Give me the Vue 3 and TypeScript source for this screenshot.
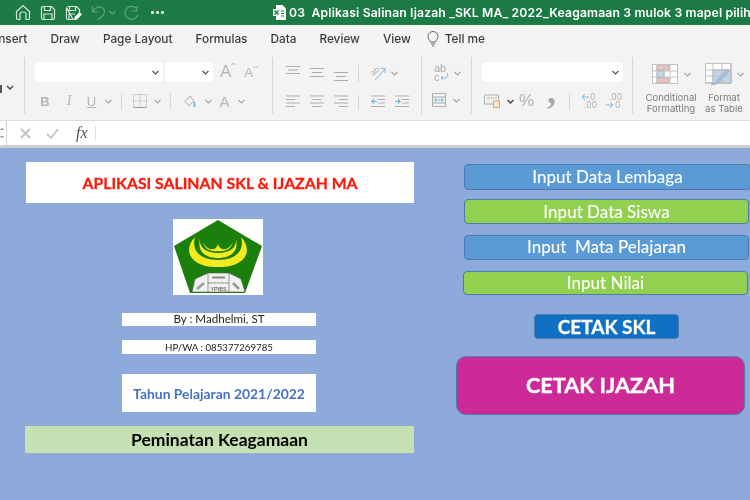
<script setup lang="ts">
const menus = ['Insert', 'Draw', 'Page Layout', 'Formulas', 'Data', 'Review', 'View']
</script>

<template>
  <div class="app">
    <header class="titlebar">
      <div class="quick">
        <svg class="q home" width="16" height="17" viewBox="0 0 16 17"><path d="M1.5 7.5 8 1.5l6.5 6v6.5a1.5 1.5 0 0 1-1.5 1.5h-2V10a2 2 0 0 0-2-2H7a2 2 0 0 0-2 2v5.5H3A1.5 1.5 0 0 1 1.5 14z" /></svg>
        <svg class="q" width="16" height="16" viewBox="0 0 16 16"><path d="M2.5 1.5h9l3 3v8.500a1.500 1.500 0 0 1-1.500 1.500H3A1.500 1.500 0 0 1 1.500 13V2.500zM4.500 1.500v4h6v-4M4 14.500V9h8v5.500" /></svg>
        <svg class="q" width="17" height="16" viewBox="0 0 17 16"><path d="M2.500 1.500h9l3 3v3M8 14.500H3A1.500 1.500 0 0 1 1.500 13V2.500zM4.500 1.500v4h6v-4M4 14.500V9h6" /><path class="pen" d="m9 15 .6-3 5-5 2.400 2.400-5 5z" /></svg>
        <svg class="q dim undo" width="15" height="17" viewBox="0 0 15 17"><path d="M1.500 8V2M1.500 8h6M1.500 8C4 3.500 8 2 11 3.500c3.500 2 3 6.500.5 8.500l-5 4" /></svg>
        <svg class="q dim chev-t" width="7" height="5" viewBox="0 0 7 5"><path d="m.5 1 3 3 3-3" /></svg>
        <svg class="q dim redo" width="16" height="16" viewBox="0 0 16 16"><path d="M13 1v5H8M14 9a6.500 6.500 0 1 1-2-6" /></svg>
        <span class="dots"><i></i><i></i><i></i></span>
      </div>
      <svg class="doc" width="13" height="15" viewBox="0 0 13 15"><path fill="#fff" d="M3 0h6.500L13 3.500V15H3z" /><rect x="0" y="4" width="7" height="7" fill="#e8f2ec" /><path d="m1.500 5.500 4 4m0-4-4 4" stroke="#1c7a45" stroke-width="1.200" /><path d="M8 6h3M8 8.500h3M8 11h3" stroke="#1c7a45" /></svg>
      <span class="filename">03&nbsp; Aplikasi Salinan Ijazah _SKL MA_ 2022_Keagamaan 3 mulok 3 mapel pilihan</span>
    </header>

    <nav class="menubar">
      <span v-for="m in menus" :key="m" class="menu-item">{{ m }}</span>
      <svg class="bulb" width="12" height="16" viewBox="0 0 12 16"><path d="M3.500 11C3 9 1 8 1 5.500a5 5 0 0 1 10 0C11 8 9 9 8.500 11zM4 13h4M5 15h2" /></svg>
      <span class="menu-item tell">Tell me</span>
    </nav>

    <section class="ribbon">
      <div class="group g0">
        <span class="stub"></span>
        <svg class="clipped-chev" width="8" height="5" viewBox="0 0 8 5"><path d="m1 1 3 3 3-3" /></svg>
      </div>

      <div class="group g1">
        <div class="row-top">
          <div class="select font"><svg class="sel-chev" width="7" height="5" viewBox="0 0 7 5"><path d="m.5 1 3 3 3-3" /></svg></div>
          <div class="select size"><svg class="sel-chev" width="7" height="5" viewBox="0 0 7 5"><path d="m.5 1 3 3 3-3" /></svg></div>
          <span class="grow-a big">A<svg width="5" height="4" viewBox="0 0 5 4"><path d="m.5 3 2-2 2 2" /></svg></span>
          <span class="grow-a small">A<svg width="5" height="4" viewBox="0 0 5 4"><path d="m.5 1 2 2 2-2" /></svg></span>
        </div>
        <div class="row-font">
          <b class="tool">B</b>
          <i class="tool serif">I</i>
          <u class="tool">U</u>
          <svg class="chev" width="7" height="5" viewBox="0 0 7 5"><path d="m.5 1 3 3 3-3" /></svg>
          <span class="vsep"></span>
          <svg class="ico" width="14" height="14" viewBox="0 0 14 14"><path stroke-dasharray="1 1" d="M.5.5h13v13H.5zM7 .5v13M.5 7h13" /><path d="M.5 13.500h13" stroke="#999" /></svg>
          <svg class="chev" width="7" height="5" viewBox="0 0 7 5"><path d="m.5 1 3 3 3-3" /></svg>
          <span class="vsep"></span>
          <svg class="ico" width="13" height="13" viewBox="0 0 13 13"><path d="M6 1 1 6.500 5 11l5-5z" /><path d="M10.500 7v5" stroke="#7db8e0" stroke-width="2" /></svg>
          <svg class="chev" width="7" height="5" viewBox="0 0 7 5"><path d="m.5 1 3 3 3-3" /></svg>
          <span class="tool tool-a">A</span>
          <svg class="chev" width="7" height="5" viewBox="0 0 7 5"><path d="m.5 1 3 3 3-3" /></svg>
        </div>
      </div>

      <div class="group g2">
        <div class="row-align">
          <svg class="ico" width="14" height="18" viewBox="0 0 14 18"><path d="M0 1.500h14M2 5h10M0 8.500h14" /></svg>
          <svg class="ico" width="14" height="18" viewBox="0 0 14 18"><path d="M0 3.500h14M2 7.500h10M0 11.500h14" /></svg>
          <svg class="ico" width="14" height="18" viewBox="0 0 14 18"><path d="M0 7.500h14M2 11.500h10M0 15.500h14" /></svg>
          <span class="vsep"></span>
          <svg class="ico" width="16" height="16" viewBox="0 0 16 16"><text class="rot" x="0" y="9" transform="rotate(-40 4 7)">ab</text><path d="m4 15 10-11M9.500 3.500H14V8" stroke="#7db8e0" /></svg>
          <svg class="chev after" width="7" height="5" viewBox="0 0 7 5"><path d="m.5 1 3 3 3-3" /></svg>
        </div>
        <div class="row-align lower">
          <svg class="ico" width="14" height="13" viewBox="0 0 14 13"><path d="M0 1h14M0 4.500h9M0 8h14M0 11.500h9" /></svg>
          <svg class="ico" width="14" height="13" viewBox="0 0 14 13"><path d="M0 1h14M2.500 4.500h9M0 8h14M2.500 11.500h9" /></svg>
          <svg class="ico" width="14" height="13" viewBox="0 0 14 13"><path d="M0 1h14M5 4.500h9M0 8h14M5 11.500h9" /></svg>
          <span class="vsep"></span>
          <svg class="ico" width="14" height="13" viewBox="0 0 14 13"><path d="M0 1h14M7 4.500h7M7 8h7M0 11.500h14" /><path d="M6 6.300H1M3 4 .8 6.300 3 8.600" stroke="#7db8e0" stroke-width="1.300" /></svg>
          <svg class="ico" width="14" height="13" viewBox="0 0 14 13"><path d="M0 1h14M7 4.500h7M7 8h7M0 11.500h14" /><path d="M0 6.300h5M3 4l2.200 2.300L3 8.600" stroke="#7db8e0" stroke-width="1.300" /></svg>
        </div>
      </div>

      <div class="group g3">
        <div class="row-wrap">
          <span class="abc">ab<br />c<svg width="9" height="8" viewBox="0 0 9 8"><path d="M7 0c2 3 0 5-2 5H1M3 3 1 5l2 2" /></svg></span>
          <svg class="chev" width="7" height="5" viewBox="0 0 7 5"><path d="m.5 1 3 3 3-3" /></svg>
        </div>
        <div class="row-wrap lower">
          <svg class="ico" width="14" height="14" viewBox="0 0 14 14"><path d="M.5.5h13v13H.5zM.5 4h13M.5 10h13" /><path d="M2.500 7h9M4.500 5 2.500 7l2 2M9.500 5l2 2-2 2" stroke="#7db8e0" /></svg>
          <svg class="chev" width="7" height="5" viewBox="0 0 7 5"><path d="m.5 1 3 3 3-3" /></svg>
        </div>
      </div>

      <div class="group g4">
        <div class="row-top">
          <div class="select number"><svg class="sel-chev" width="7" height="5" viewBox="0 0 7 5"><path d="m.5 1 3 3 3-3" /></svg></div>
        </div>
        <div class="row-number">
          <svg class="ico" width="16" height="14" viewBox="0 0 16 14"><path d="M.5 1h14v9H.5zM3 4h3M7 4h3M11 4h2" /><rect x="9.500" y="7" width="6" height="6.500" fill="#fbe7d0" stroke="#e8a767" /></svg>
          <svg class="chev dark" width="7" height="5" viewBox="0 0 7 5"><path d="m.5 1 3 3 3-3" /></svg>
          <span class="percent">%</span>
          <span class="comma">,</span>
          <span class="vsep"></span>
          <span class="decimal"><svg width="8" height="8" viewBox="0 0 8 8"><path d="M8 4H1M4 1 1 4l3 3" /></svg><em>0</em><em class="wide">.00</em></span>
          <span class="decimal dec2"><em class="wide">.00</em><svg width="8" height="8" viewBox="0 0 8 8"><path d="M0 4h7M4 1l3 3-3 3" /></svg><em>0</em></span>
        </div>
      </div>

      <div class="group g5">
        <div class="style-btn cond">
          <div class="style-icon">
            <svg width="26" height="20" viewBox="0 0 26 20">
              <path fill="#fff" d="M0 0h26v20H0z" />
              <path fill="#f3c3c6" d="M5 1h12v5H5zM5 14h12v5H5z" />
              <path fill="#bcd6ef" d="M5 7h7v6H5z" />
              <path class="cell" d="M.5.500h25v19H.5zM5 .5v19M12 .5v19M18 .5v19M.5 7h25M.5 13h25" />
            </svg>
            <svg class="chev" width="7" height="5" viewBox="0 0 7 5"><path d="m.5 1 3 3 3-3" /></svg>
          </div>
          <span>Conditional<br />Formatting</span>
        </div>
        <div class="style-btn table">
          <div class="style-icon">
            <svg width="27" height="22" viewBox="0 0 27 22">
              <path fill="#fff" d="M0 0h26v20H0z" />
              <path fill="#bcd6ef" d="M8 7h18v13H8z" />
              <path class="cell" d="M.5.500h25v19H.5zM8 .5v19M17 .5v19M.5 7h25M.5 13h25" />
              <path fill="#9fc3e4" d="M6 21c3 0 6-1 6-4l10-11 2 2-10 11c-2 2-5 3-8 2z" />
            </svg>
            <svg class="chev" width="7" height="5" viewBox="0 0 7 5"><path d="m.5 1 3 3 3-3" /></svg>
          </div>
          <span>Format<br />as Table</span>
        </div>
      </div>
    </section>

    <div class="formula-bar">
      <div class="name-box">
        <svg width="4" height="14" viewBox="0 0 4 14"><path d="M.5 4 2 2.500 3.500 4M.5 10 2 11.500 3.500 10" /></svg>
      </div>
      <div class="formula-input">
        <svg class="fx-btn" width="11" height="11" viewBox="0 0 11 11"><path d="m1 1 9 9m0-9-9 9" /></svg>
        <svg class="fx-btn" width="13" height="11" viewBox="0 0 13 11"><path d="m1 6 4 4 7-9" /></svg>
        <span class="fx">fx</span>
        <span class="fx-sep"></span>
      </div>
    </div>

    <main class="sheet">
      <div class="col-left">
        <div class="title">APLIKASI SALINAN SKL &amp; IJAZAH MA</div>
        <div class="logo">
          <svg width="90" height="76" viewBox="0 0 90 76">
            <path fill="#1b7f0c" d="M45 1 89 27 72 74H17L1 27z" />
            <path fill="#f4ea1e" d="M22 18C8 33 20 49 45 48 70 49 82 33 68 18 72 32 62 41 45 41 28 41 18 32 22 18z" />
            <path fill="#f4ea1e" d="M27 20c-3 12 5 19 18 19s21-7 18-19c1 9-7 14-18 14s-19-5-18-14z" />
            <path fill="#f4ea1e" d="M30 23c3 6 7 8 11 7 2-1 3-2 4-5 1 3 2 4 4 5 4 1 8-1 11-7-2 8-9 10-15 9-6 1-13-1-15-9z" />
            <path fill="#f2f2f0" stroke="#555" stroke-width=".6" d="M22 60 35 54H56L68 60 72 73H19z" />
            <path stroke="#555" stroke-width=".6" d="M35 54V73M56 54V73M35 64H56" />
            <path stroke="#8a8a8a" stroke-width="2" d="M39 58.500H52" />
            <path stroke="#9a9a9a" stroke-width="2.500" d="m24 70 7-6M60 64l6 6" />
            <text x="45.500" y="71.500" text-anchor="middle" class="ypibs">YPIBS</text>
          </svg>
        </div>
        <div class="credit by">By : Madhelmi, ST</div>
        <div class="credit hp">HP/WA : 085377269785</div>
        <div class="year">Tahun Pelajaran 2021/2022</div>
        <div class="track">Peminatan Keagamaan</div>
      </div>

      <div class="col-right">
        <button class="btn blue lembaga">Input Data Lembaga</button>
        <button class="btn green siswa">Input Data Siswa</button>
        <button class="btn blue mapel">Input&nbsp; Mata Pelajaran</button>
        <button class="btn green nilai">Input Nilai</button>
        <button class="btn skl">CETAK SKL</button>
        <button class="btn ijazah">CETAK IJAZAH</button>
      </div>
    </main>
  </div>
</template>

<style scoped>
.app {
  width: 750px;
  height: 500px;
  overflow: hidden;
  display: flex;
  flex-direction: column;
  font-family: Inter, "Liberation Sans", sans-serif;
  background: #8eaadb;
  filter: blur(0.35px);
}

svg {
  flex: none;
  display: block;
  fill: none;
  stroke: #adadad;
}

/* title bar */
.titlebar {
  height: 25px;
  flex: none;
  display: flex;
  align-items: center;
  background: #1c7a45;
  color: #fff;
  white-space: nowrap;
  overflow: hidden;
}
.quick {
  width: 273px;
  flex: none;
  display: flex;
  align-items: center;
  padding-left: 15px;
  box-sizing: border-box;
}
.quick svg {
  stroke: #d6e8dc;
  stroke-width: 1.2;
  margin-right: 9px;
}
.quick .dim {
  stroke: #5fa37c;
}
.quick .pen {
  fill: #fff;
  stroke: none;
}
.quick .undo {
  margin-right: 3px;
}
.quick .chev-t {
  margin-right: 8px;
}
.dots {
  display: flex;
  gap: 2.500px;
  margin-left: 2px;
}
.dots i {
  width: 2.500px;
  height: 2.500px;
  border-radius: 50%;
  background: #e4f0e8;
}
.doc {
  margin-right: 3px;
  stroke: none;
}
.filename {
  font-size: 12.2px;
  font-weight: 600;
  letter-spacing: 0.15px;
}

/* menu */
.menubar {
  height: 27px;
  flex: none;
  display: flex;
  align-items: center;
  gap: 23px;
  margin-left: -5px;
  background: #f4f4f4;
  font-size: 11.800px;
  font-weight: 500;
  color: #3c3c3c;
  white-space: nowrap;
}
.bulb {
  stroke: #666;
  margin-left: -7px;
}
.tell {
  margin-left: -17px;
}

/* ribbon */
.ribbon {
  height: 69px;
  flex: none;
  display: flex;
  padding-top: 5px;
  box-sizing: border-box;
  background: #f3f3f3;
  border-bottom: 1px solid #dcdcdc;
}
.group {
  height: 57px;
  box-sizing: border-box;
  border-left: 1px solid #d6d6d6;
  display: flex;
  flex-direction: column;
}
.g0 {
  width: 24px;
  border-left: 0;
  flex-direction: row;
  align-items: flex-start;
  gap: 4px;
  padding-top: 28px;
}
.stub {
  width: 2px;
  height: 8px;
  background: #555;
}
.clipped-chev {
  stroke: #444;
  stroke-width: 1.4;
}
.g1 {
  width: 248px;
}
.g2 {
  width: 149px;
}
.g3 {
  width: 50px;
}
.g4 {
  width: 161px;
}
.g5 {
  flex: 1;
  flex-direction: row;
}
.row-top {
  display: flex;
  align-items: center;
  height: 20px;
  padding: 5px 0 0 10px;
  box-sizing: content-box;
}
.select {
  height: 20px;
  box-sizing: border-box;
  background: #fff;
  border-radius: 3px;
  display: flex;
  align-items: center;
  justify-content: flex-end;
  padding-right: 4px;
}
.font {
  width: 128px;
}
.size {
  width: 48px;
  margin-left: 2px;
}
.number {
  width: 141px;
}
.sel-chev {
  stroke: #555;
  stroke-width: 1.2;
}
.grow-a {
  display: flex;
  align-items: flex-start;
  color: #b5b5b5;
  font-family: "Liberation Sans", sans-serif;
}
.grow-a svg {
  stroke: #8fc1e3;
}
.big {
  font-size: 17px;
  margin-left: 7px;
}
.small {
  font-size: 13px;
  margin-left: 8px;
}
.row-font {
  display: grid;
  grid-template-columns: 24px 24px 21px 12px 14px 24px 10px 16px 24px 12px 21px 12px;
  align-items: center;
  justify-items: center;
  height: 22px;
  margin-top: 8px;
  padding-left: 8px;
  font-size: 14px;
  color: #b5b5b5;
}
.tool {
  font-family: "Liberation Sans", sans-serif;
  font-size: 13px;
}
.serif {
  font-family: "Liberation Serif", serif;
  font-size: 14px;
}
.tool-a {
  font-size: 15px;
}
.chev {
  stroke: #a6a6a6;
  stroke-width: 1.2;
}
.chev.dark {
  stroke: #444;
  stroke-width: 1.4;
}
.vsep {
  display: block;
  width: 1px;
  height: 17px;
  background: #d6d6d6;
}
.row-align {
  display: flex;
  align-items: flex-start;
  gap: 10px;
  padding: 8px 0 0 13px;
  height: 18px;
}
.row-align .vsep + svg {
  margin-left: 2px;
}
.row-align .chev {
  margin-top: 6px;
  margin-left: -6px;
}
.rot {
  font-family: "Liberation Sans", sans-serif;
  font-size: 8px;
  fill: #b0b0b0;
  stroke: none;
}
.row-align.lower {
  margin-top: 12px;
  padding-top: 0;
  height: 13px;
}
.row-align.lower .vsep {
  height: 15px;
}
.row-wrap {
  display: flex;
  align-items: center;
  gap: 3px;
  height: 18px;
  padding: 7px 0 0 12px;
}
.row-wrap.lower {
  margin-top: 9px;
  padding-top: 0;
  padding-left: 10px;
  gap: 7px;
}
.abc {
  display: block;
  width: 17px;
  font-family: "Liberation Sans", sans-serif;
  font-size: 11px;
  line-height: 9px;
  color: #aaa;
}
.abc svg {
  display: inline-block;
  stroke: #7db8e0;
}
.row-number {
  display: flex;
  align-items: center;
  height: 22px;
  margin-top: 8px;
  padding-left: 12px;
}
.row-number .chev.dark {
  margin-left: 7px;
}
.percent {
  margin-left: 5px;
  width: 16px;
  font-family: "Liberation Sans", sans-serif;
  font-size: 17px;
  font-weight: 300;
  color: #b0b0b0;
}
.comma {
  margin-left: 12px;
  width: 9px;
  height: 22px;
  line-height: 2px;
  font-family: "Liberation Serif", serif;
  font-size: 36px;
  font-weight: 700;
  color: #a8a8a8;
}
.row-number .vsep {
  margin-left: 13px;
}
.decimal {
  width: 16px;
  margin-left: 11px;
  display: grid;
  grid-template-columns: 9px 7px;
  font-size: 8.500px;
  line-height: 8px;
  color: #b0b0b0;
  align-items: center;
}
.decimal em {
  font-style: normal;
}
.decimal .wide {
  grid-column: 1 / 3;
  text-align: right;
}
.decimal svg {
  stroke: #7db8e0;
}
.dec2 {
  margin-left: 9px;
}

.style-btn {
  display: flex;
  flex-direction: column;
  align-items: center;
  font-size: 9.600px;
  line-height: 11px;
  color: #7c7c7c;
  text-align: center;
}
.style-icon {
  flex: none;
  display: flex;
  align-items: center;
  gap: 6px;
  height: 22px;
  margin-top: 6px;
  margin-bottom: 7px;
}
.cond {
  width: 74px;
  padding-left: 1px;
}
.table {
  width: 42px;
  margin-left: -5px;
}
.table .style-icon {
  gap: 5px;
}
.cell {
  stroke: #c2c2c2;
}

/* formula bar */
.formula-bar {
  height: 27px;
  flex: none;
  box-sizing: border-box;
  display: flex;
  gap: 1px;
  background: #cfcfcf;
  padding-bottom: 3px;
}
.name-box {
  width: 6px;
  background: #fff;
  display: flex;
  align-items: center;
}
.name-box svg {
  stroke: #555;
}
.formula-input {
  flex: 1;
  background: #fff;
  display: flex;
  align-items: center;
  padding-left: 13px;
  gap: 15px;
}
.fx-btn {
  stroke: #c4c4c4;
  stroke-width: 1.8;
}
.fx {
  margin-left: 2px;
  font-family: "Liberation Serif", serif;
  font-style: italic;
  font-size: 16px;
  color: #555;
}
.fx-sep {
  width: 1px;
  height: 14px;
  margin-left: -8px;
  background: #e0e0e0;
}

/* sheet */
.sheet {
  flex: 1;
  display: flex;
  font-family: Lato, "Open Sans", sans-serif;
  background: #8eaadb;
}
.col-left {
  width: 440px;
  display: flex;
  flex-direction: column;
  align-items: center;
  padding-top: 14px;
}
.title {
  width: 388px;
  height: 41px;
  flex: none;
  background: #fff;
  display: flex;
  align-items: center;
  justify-content: center;
  font-size: 15.800px;
  font-weight: 700;
  color: #fb1c0c;
  -webkit-text-stroke: 0.3px #fb1c0c;
  box-sizing: border-box;
}
.logo {
  width: 90px;
  height: 76px;
  margin: 16px 4px 0 0;
  background: #fff;
}
.logo svg {
  stroke: none;
}
.ypibs {
  font-family: "Liberation Sans", sans-serif;
  font-size: 5.500px;
  fill: #444;
}
.credit {
  width: 194px;
  background: #fff;
  text-align: center;
  color: #222;
  margin-right: 2px;
}
.by {
  height: 13px;
  margin-top: 18px;
  font-size: 11.600px;
  line-height: 11px;
}
.hp {
  height: 14px;
  margin-top: 14px;
  font-size: 9.700px;
  line-height: 15px;
}
.year {
  width: 194px;
  height: 38px;
  margin: 20px 2px 0 0;
  background: #fff;
  display: flex;
  align-items: center;
  justify-content: center;
  font-size: 13.900px;
  font-weight: 700;
  color: #4472c4;
}
.track {
  width: 389px;
  height: 27px;
  margin: 14px 1px 0 0;
  background: #c5e0b3;
  display: flex;
  align-items: center;
  justify-content: center;
  font-size: 17.500px;
  font-weight: 700;
  color: #000;
}
.col-right {
  flex: none;
  width: 294px;
  margin-left: 16px;
  display: flex;
  flex-direction: column;
  align-items: flex-start;
  padding-top: 16px;
}
.btn {
  display: block;
  margin: 0;
  padding: 0 0 1px;
  box-sizing: border-box;
  font-family: inherit;
  color: #fff;
  border: 1px solid #4c7bb0;
  border-radius: 4px;
  font-size: 17px;
  font-weight: 500;
  text-align: center;
}
.blue {
  background: #5b9bd5;
}
.green {
  background: #92d050;
}
.lembaga {
  width: 287px;
  height: 26px;
  margin-left: 8px;
}
.siswa {
  width: 285px;
  height: 25px;
  margin: 9px 0 0 8px;
}
.mapel {
  width: 285px;
  height: 25px;
  margin: 11px 0 0 8px;
  padding-bottom: 3px;
}
.nilai {
  width: 285px;
  height: 24px;
  margin: 11px 0 0 7px;
}
.skl {
  width: 145px;
  height: 25px;
  margin: 19px 0 0 78px;
  background: #0f70c4;
  font-size: 19px;
  font-weight: 700;
  -webkit-text-stroke: 0.3px #fff;
}
.ijazah {
  width: 289px;
  height: 59px;
  margin-top: 17px;
  background: #cc2a96;
  border-radius: 10px;
  font-size: 21.700px;
  font-weight: 700;
  -webkit-text-stroke: 0.4px #fff;
}
</style>

<style>
html,
body {
  margin: 0;
  background: #8eaadb;
}
</style>
